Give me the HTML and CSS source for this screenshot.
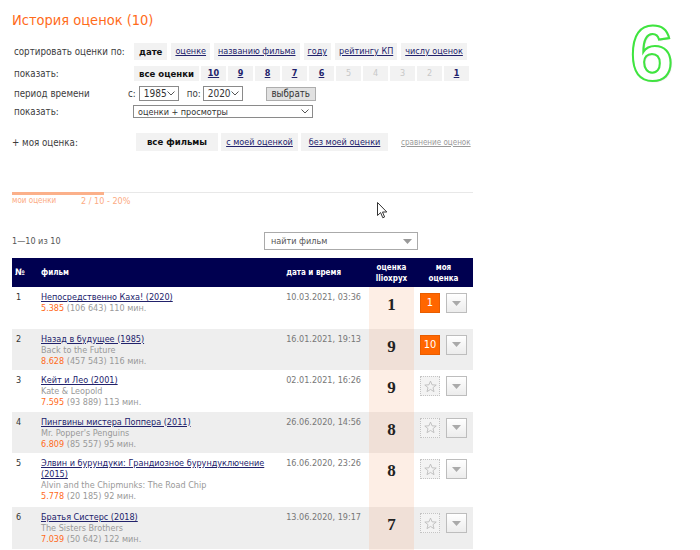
FILE: index.html
```html
<!DOCTYPE html>
<html lang="ru">
<head>
<meta charset="utf-8">
<title>История оценок</title>
<link rel="stylesheet" href="styles.css">
</head>
<body>
<div class="page">
  <h1 class="title">История оценок (10)</h1>

  <div class="frow r-sort">
    <span class="flabel">сортировать оценки по:</span>
    <div class="tabs">
      <span class="tab cur">дате</span>
      <a class="tab" href="#">оценке</a>
      <a class="tab" href="#">названию фильма</a>
      <a class="tab" href="#">году</a>
      <a class="tab" href="#">рейтингу КП</a>
      <a class="tab" href="#">числу оценок</a>
    </div>
  </div>

  <div class="frow r-show">
    <span class="flabel">показать:</span>
    <div class="tabs tight">
      <span class="tab cur all">все оценки</span>
      <a class="tab num" href="#">10</a>
      <a class="tab num" href="#">9</a>
      <a class="tab num" href="#">8</a>
      <a class="tab num" href="#">7</a>
      <a class="tab num" href="#">6</a>
      <span class="tab num off">5</span>
      <span class="tab num off">4</span>
      <span class="tab num off">3</span>
      <span class="tab num off">2</span>
      <a class="tab num" href="#">1</a>
    </div>
  </div>

  <div class="frow r-period">
    <span class="flabel plabel-w">период времени</span>
    <span class="pfrom">с:</span>
    <span class="sel year">1985<svg class="chev" width="8" height="5" viewBox="0 0 8 5"><polyline points="0.5,0.5 4,4 7.5,0.5" fill="none" stroke="#555" stroke-width="1"/></svg></span>
    <span class="pto">по:</span>
    <span class="sel year">2020<svg class="chev" width="8" height="5" viewBox="0 0 8 5"><polyline points="0.5,0.5 4,4 7.5,0.5" fill="none" stroke="#555" stroke-width="1"/></svg></span>
    <span class="btn">выбрать</span>
  </div>

  <div class="frow r-view">
    <span class="flabel view-w">показать:</span>
    <span class="sel view">оценки + просмотры<svg class="chev" width="8" height="5" viewBox="0 0 8 5"><polyline points="0.5,0.5 4,4 7.5,0.5" fill="none" stroke="#555" stroke-width="1"/></svg></span>
  </div>

  <div class="frow r-mine">
    <span class="mlabel">+ моя оценка:</span>
    <div class="tabs mtabs">
      <span class="tab cur w-all">все фильмы</span>
      <a class="tab w-with" href="#">с моей оценкой</a>
      <a class="tab w-without" href="#">без моей оценки</a>
    </div>
    <a class="compare" href="#">сравнение оценок</a>
  </div>

  <div class="progress">
    <div class="track"><div class="fill" style="width:92px"></div></div>
    <div class="plabels">
      <span class="pl-name">мои оценки</span>
      <span class="pl-val">2 / 10 - 20%</span>
    </div>
  </div>

  <div class="countrow">
    <span class="count">1—10 из 10</span>
    <span class="find">найти фильм<svg class="tri" width="9" height="5" viewBox="0 0 9 5"><polygon points="0,0 9,0 4.5,5" fill="#999"/></svg></span>
  </div>

  <table class="films">
    <thead>
      <tr>
        <th class="c-num">№</th>
        <th class="c-film">фильм</th>
        <th class="c-date">дата и время</th>
        <th class="c-score">оценка<br>llioxpyx</th>
        <th class="c-my">моя<br>оценка</th>
      </tr>
    </thead>
    <tbody>
      <tr>
        <td class="c-num">1</td>
        <td class="c-film"><a class="ftitle" href="#">Непосредственно Каха! (2020)</a><br><span class="rate">5.385</span> <span class="stat">(106 643) 110 мин.</span></td>
        <td class="c-date">10.03.2021, 03:36</td>
        <td class="c-score">1</td>
        <td class="c-my"><div class="my"><span class="mark">1</span><span class="dd"><svg width="9" height="5" viewBox="0 0 9 5"><polygon points="0,0 9,0 4.5,5" fill="#aaa"/></svg></span></div></td>
      </tr>
      <tr class="alt">
        <td class="c-num">2</td>
        <td class="c-film"><a class="ftitle" href="#">Назад в будущее (1985)</a><br><span class="orig">Back to the Future</span><br><span class="rate">8.628</span> <span class="stat">(457 543) 116 мин.</span></td>
        <td class="c-date">16.01.2021, 19:13</td>
        <td class="c-score">9</td>
        <td class="c-my"><div class="my"><span class="mark">10</span><span class="dd"><svg width="9" height="5" viewBox="0 0 9 5"><polygon points="0,0 9,0 4.5,5" fill="#aaa"/></svg></span></div></td>
      </tr>
      <tr>
        <td class="c-num">3</td>
        <td class="c-film"><a class="ftitle" href="#">Кейт и Лео (2001)</a><br><span class="orig">Kate &amp; Leopold</span><br><span class="rate">7.595</span> <span class="stat">(93 889) 113 мин.</span></td>
        <td class="c-date">02.01.2021, 16:26</td>
        <td class="c-score">9</td>
        <td class="c-my"><div class="my"><span class="star"><svg width="13" height="13" viewBox="0 0 24 24"><polygon points="12,2 14.9,8.9 22.5,9.3 16.6,14.1 18.5,21.5 12,17.4 5.5,21.5 7.4,14.1 1.5,9.3 9.1,8.9" fill="none" stroke="#bbb" stroke-width="1.6"/></svg></span><span class="dd"><svg width="9" height="5" viewBox="0 0 9 5"><polygon points="0,0 9,0 4.5,5" fill="#aaa"/></svg></span></div></td>
      </tr>
      <tr class="alt">
        <td class="c-num">4</td>
        <td class="c-film"><a class="ftitle" href="#">Пингвины мистера Поппера (2011)</a><br><span class="orig">Mr. Popper's Penguins</span><br><span class="rate">6.809</span> <span class="stat">(85 557) 95 мин.</span></td>
        <td class="c-date">26.06.2020, 14:56</td>
        <td class="c-score">8</td>
        <td class="c-my"><div class="my"><span class="star"><svg width="13" height="13" viewBox="0 0 24 24"><polygon points="12,2 14.9,8.9 22.5,9.3 16.6,14.1 18.5,21.5 12,17.4 5.5,21.5 7.4,14.1 1.5,9.3 9.1,8.9" fill="none" stroke="#bbb" stroke-width="1.6"/></svg></span><span class="dd"><svg width="9" height="5" viewBox="0 0 9 5"><polygon points="0,0 9,0 4.5,5" fill="#aaa"/></svg></span></div></td>
      </tr>
      <tr class="tall">
        <td class="c-num">5</td>
        <td class="c-film"><a class="ftitle" href="#">Элвин и бурундуки: Грандиозное бурундуключение (2015)</a><br><span class="orig">Alvin and the Chipmunks: The Road Chip</span><br><span class="rate">5.778</span> <span class="stat">(20 185) 92 мин.</span></td>
        <td class="c-date">16.06.2020, 23:26</td>
        <td class="c-score">8</td>
        <td class="c-my"><div class="my"><span class="star"><svg width="13" height="13" viewBox="0 0 24 24"><polygon points="12,2 14.9,8.9 22.5,9.3 16.6,14.1 18.5,21.5 12,17.4 5.5,21.5 7.4,14.1 1.5,9.3 9.1,8.9" fill="none" stroke="#bbb" stroke-width="1.6"/></svg></span><span class="dd"><svg width="9" height="5" viewBox="0 0 9 5"><polygon points="0,0 9,0 4.5,5" fill="#aaa"/></svg></span></div></td>
      </tr>
      <tr class="alt">
        <td class="c-num">6</td>
        <td class="c-film"><a class="ftitle" href="#">Братья Систерс (2018)</a><br><span class="orig">The Sisters Brothers</span><br><span class="rate">7.039</span> <span class="stat">(50 642) 122 мин.</span></td>
        <td class="c-date">13.06.2020, 19:17</td>
        <td class="c-score">7</td>
        <td class="c-my"><div class="my"><span class="star"><svg width="13" height="13" viewBox="0 0 24 24"><polygon points="12,2 14.9,8.9 22.5,9.3 16.6,14.1 18.5,21.5 12,17.4 5.5,21.5 7.4,14.1 1.5,9.3 9.1,8.9" fill="none" stroke="#bbb" stroke-width="1.6"/></svg></span><span class="dd"><svg width="9" height="5" viewBox="0 0 9 5"><polygon points="0,0 9,0 4.5,5" fill="#aaa"/></svg></span></div></td>
      </tr>
      <tr class="tail">
        <td class="c-num"></td>
        <td class="c-film"></td>
        <td class="c-date"></td>
        <td class="c-score"></td>
        <td class="c-my"></td>
      </tr>
    </tbody>
  </table>

  <span class="step">6</span>
  <svg class="cursor" width="12" height="17" viewBox="0 0 12 17"><path d="M0.5 0.5 L0.5 13.5 L3.6 10.6 L5.8 15.8 L7.6 15 L5.5 10 L9.8 10 Z" fill="#fff" stroke="#333" stroke-width="1" stroke-linejoin="round"/></svg>
</div>
</body>
</html>
```

FILE: styles.css
```css
* { box-sizing: border-box; }

html, body {
  margin: 0;
  background: #fff;
}

body {
  font-family: "DejaVu Sans Condensed", "Liberation Sans", Arial, sans-serif;
  font-size: 9.7px;
  color: #3c3c3c;
  overflow: hidden;
  height: 550px;
}

a { color: #22226b; }

.page {
  width: 461px;
  margin-left: 12px;
}

.title {
  margin: 10px 0 0;
  font-size: 14.5px;
  line-height: 20px;
  font-weight: normal;
  color: #ff6b1a;
}

.frow {
  display: flex;
  align-items: center;
  padding-left: 2px;
}

.flabel {
  flex: none;
  width: 120px;
  white-space: nowrap;
}

.tabs {
  display: flex;
  gap: 4px;
}

.tabs.tight { gap: 2px; }

.tab {
  display: block;
  background: #f2f2f2;
  padding: 0 4px;
  font-size: 9px;
  color: #22226b;
  text-decoration: underline;
  white-space: nowrap;
  text-align: center;
}

.tab.cur {
  font-weight: bold;
  font-size: 9.5px;
  color: #111;
  text-decoration: none;
}

.r-sort {
  margin-top: 13px;
}
.r-sort .tab { height: 17px; line-height: 17px; }
.r-sort .tab.cur { padding: 0 5px; }

.r-show { margin-top: 6px; }
.r-show .tab { height: 15px; line-height: 15px; }
.r-show .tab.all { width: 65px; }
.r-show .tab.num { width: 25px; font-weight: bold; }
.r-show .tab.off { color: #c8c8c8; text-decoration: none; font-weight: normal; }

.r-period { margin-top: 4px; height: 17px; }
.plabel-w { width: 114px; }
.pfrom { margin-right: 3px; }
.pto { margin-left: 8px; margin-right: 2px; }

.sel {
  display: flex;
  align-items: center;
  justify-content: space-between;
  border: 1px solid #8a8a8a;
  background: #fff;
  color: #333;
  font-size: 10px;
  padding: 0 3px 0 4px;
  white-space: nowrap;
}
.sel.year { width: 40px; height: 15px; }
.chev { flex: none; }

.btn {
  margin-left: 23px;
  width: 50px;
  height: 14px;
  line-height: 12px;
  border: 1px solid #adadad;
  background: #e1e1e1;
  color: #333;
  text-align: center;
  font-size: 9.7px;
}

.r-view { margin-top: 3px; }
.view-w { width: 119px; }
.sel.view { width: 180px; height: 13px; font-size: 9px; }

.r-mine { margin-top: 15px; padding-left: 0; }
.mlabel { width: 124px; flex: none; }
.mtabs { gap: 3px; }
.mtabs .tab { height: 18px; line-height: 18px; }
.w-all { width: 82px; }
.w-with { width: 77px; }
.w-without { width: 87px; }

.compare {
  margin-left: 13px;
  font-size: 8px;
  color: #999;
  white-space: nowrap;
}

.progress { margin-top: 41px; }
.track { height: 1px; background: #e8e8e8; }
.fill { height: 3px; background: #fbb08a; }
.plabels {
  display: flex;
  margin-top: 3px;
  line-height: 10px;
  color: #fcab83;
}
.pl-name { width: 69px; font-size: 8px; }
.pl-val { font-size: 9px; }

.countrow {
  margin-top: 26px;
  width: 406px;
  display: flex;
  align-items: center;
  justify-content: space-between;
}
.count { color: #555; font-size: 9px; }
.find {
  width: 154px;
  height: 18px;
  border: 1px solid #aaa;
  display: flex;
  align-items: center;
  justify-content: space-between;
  padding: 0 5px 0 6px;
  font-size: 9px;
  color: #555;
}

.films {
  margin-top: 8px;
  width: 461px;
  border-collapse: collapse;
  table-layout: fixed;
}

.films th {
  background: #000050;
  color: #fff;
  font-size: 8px;
  font-weight: bold;
  height: 29px;
  line-height: 11px;
  padding: 0;
  text-align: left;
  vertical-align: middle;
}

.films td {
  padding: 5px 0 3px;
  height: 41.5px;
  vertical-align: top;
  line-height: 11px;
  font-size: 9px;
}

.films tr.tall td { padding-bottom: 5px; }

.films tr.alt td { background: #eeeeee; }

th.c-num { width: 26px; }
.films th.c-num { font-size: 9px; padding-left: 3px; }
td.c-num { padding-left: 4px; color: #333; }
.films th.c-film { padding-left: 3px; }
td.c-film { padding-left: 3px; padding-right: 4px; }
.films th.c-date { width: 99px; text-align: right; padding-right: 28px; }
td.c-date { text-align: right; padding-right: 8px; color: #777; white-space: nowrap; }
th.c-score { width: 45px; }
.films th.c-score, .films th.c-my { text-align: center; }
th.c-my { width: 59px; }

.films td.c-score {
  background: #fdeee5;
  text-align: center;
  font-family: "Liberation Serif", "Times New Roman", serif;
  font-weight: bold;
  font-size: 17px;
  color: #222;
  padding-top: 8px;
  line-height: 20px;
}
.films tr.alt td.c-score { background: #f0e0d7; }

.ftitle { color: #22226b; }
.orig { color: #999; }
.rate { color: #ff6a1a; }
.stat { color: #999; }

.films td.c-my { padding: 6px 0 0 6px; }
.my { display: flex; gap: 6px; }

.mark {
  width: 20px;
  height: 20px;
  background: #ff6600;
  border: 1px solid #e85d00;
  color: #fff;
  font-size: 11px;
  line-height: 18px;
  text-align: center;
}

.star {
  width: 20px;
  height: 20px;
  border: 1px dotted #c4c4c4;
  background: #f3f3f3;
  display: flex;
  align-items: center;
  justify-content: center;
}

.dd {
  width: 21px;
  height: 20px;
  border: 1px solid #bdbdbd;
  background: linear-gradient(#ffffff, #ececec);
  display: flex;
  align-items: center;
  justify-content: center;
}

.step {
  position: absolute;
  left: 630px;
  top: 14px;
  font-family: "Liberation Sans", Arial, sans-serif;
  font-weight: bold;
  font-size: 78px;
  line-height: 1;
  color: #fff;
  -webkit-text-stroke: 2px #3fe43f;
  text-shadow: 1px 1px 1px rgba(0,0,0,0.25);
}

.cursor {
  position: absolute;
  left: 377px;
  top: 202px;
}
```
